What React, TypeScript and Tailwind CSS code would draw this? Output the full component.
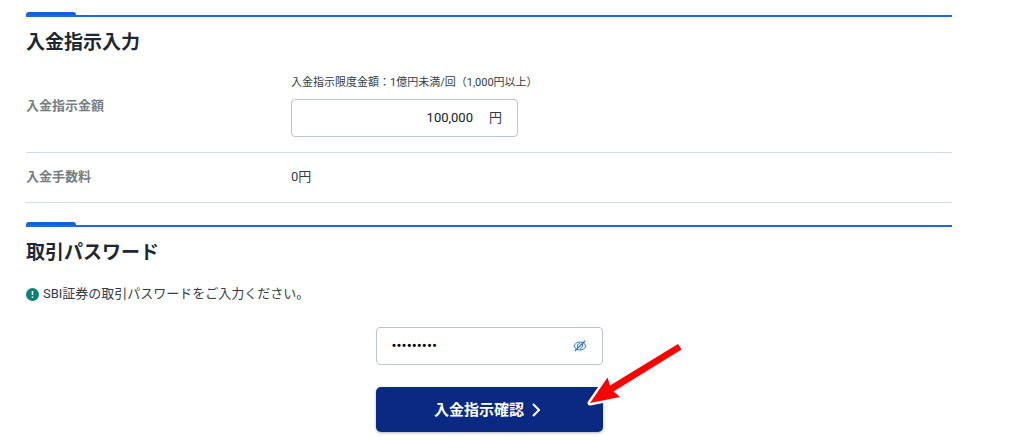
import { useState } from 'react'
import type { ReactNode } from 'react'

function SectionTitle({ children }: { children: ReactNode }) {
  return (
    <div>
      <div className="border-b-2 border-[#1b6ae0]">
        <div className="h-[3px] w-[50px] rounded-t-[3px] bg-[#1260d6]" />
      </div>
      <h2 className="mt-[13px] text-[19px] leading-[26px] font-bold text-[#1c2833]">{children}</h2>
    </div>
  )
}

function EyeOffIcon() {
  return (
    <svg viewBox="0 0 14 14" className="size-[14px]" fill="none" stroke="#2f70dc" aria-hidden="true">
      <path d="M1 7C2.2 4.3 4.3 3 7 3s4.8 1.3 6 4c-1.2 2.7-3.3 4-6 4S2.2 9.7 1 7Z" />
      <path d="M9.5 4.5C10 6.6 9.3 9 7 9.6M4.6 9C3.8 6.600 4.700 4.800 7 4.400" />
      <path d="M1.800 12 12.200 1.800" strokeWidth="1.200" />
    </svg>
  )
}

function Pointer() {
  return (
    <svg
      viewBox="0 0 100 66"
      className="pointer-events-none absolute -right-[82px] -top-[47px] h-[66px] w-[100px]"
      aria-hidden="true"
    >
      <path
        d="M5 63 22.500 38 25 46 93 4.500 96 9.500 28.500 51.500 35 57Z"
        fill="#fff"
        stroke="#fff"
        strokeWidth="5"
        strokeLinejoin="round"
      />
      <path d="M5 63 22.500 37.500 25 45.500 93 4 96.500 9.500 28.500 51.500 35 57Z" fill="#fe0000" />
    </svg>
  )
}

export default function App() {
  const [amount, setAmount] = useState('100,000')
  const [password, setPassword] = useState('password1')
  const [visible, setVisible] = useState(false)

  return (
    <main className="overflow-x-hidden bg-white pt-3 pr-[72px] pb-4 pl-[26px] font-['Roboto','Noto_Sans_CJK_JP',sans-serif] text-[13px] leading-5 text-[#333c46]">
      <section>
        <SectionTitle>入金指示入力</SectionTitle>
        <div className="mt-[19px] flex items-center border-b border-[#d3dbea] pb-[15px]">
          <label htmlFor="amount" className="w-[265px] shrink-0 font-bold text-[#767e83]">
            入金指示金額
          </label>
          <div>
            <p className="text-[11px] leading-4">入金指示限度金額：1億円未満/回（1,000円以上）</p>
            <div className="mt-2 flex h-[38px] w-[227px] items-center rounded-[4px] border border-[#bcc4d1] pr-[15px]">
              <input
                id="amount"
                type="text"
                inputMode="numeric"
                value={amount}
                onChange={(e) => setAmount(e.target.value)}
                className="w-full min-w-0 bg-transparent text-right text-[#14202b] outline-none"
              />
              <span className="ml-4 shrink-0">円</span>
            </div>
          </div>
        </div>
        <dl className="flex items-center border-b border-[#d3dbea] pt-[14px] pb-[15px]">
          <dt className="w-[265px] shrink-0 font-bold text-[#767e83]">入金手数料</dt>
          <dd>0円</dd>
        </dl>
      </section>

      <section className="mt-[19px]">
        <SectionTitle>取引パスワード</SectionTitle>
        <p className="mt-[18px] flex items-center gap-1">
          <svg viewBox="0 0 13 13" className="size-[13px]" aria-hidden="true">
            <circle cx="6.5" cy="6.5" r="6.5" fill="#078377" />
            <path d="M6.5 3v4M6.5 8.500v1.500" stroke="#fff" strokeWidth="1.5" />
          </svg>
          SBI証券の取引パスワードをご入力ください。
        </p>
        <div className="mx-auto mt-[23px] w-[227px]">
          <div className="flex h-[38px] items-center rounded-[4px] border border-[#bcc4d1] px-[15px]">
            <input
              type={visible ? 'text' : 'password'}
              aria-label="取引パスワード"
              value={password}
              onChange={(e) => setPassword(e.target.value)}
              className="w-full min-w-0 bg-transparent text-[15px] text-black outline-none"
            />
            <button type="button" aria-label="パスワードを表示" onClick={() => setVisible(!visible)}>
              <EyeOffIcon />
            </button>
          </div>
          <div className="relative mt-[22px]">
            <button
              type="button"
              className="flex h-[45px] w-full items-center justify-center gap-2 rounded-[5px] bg-[#092983] pr-1 text-[15px] font-bold text-white shadow-[0_1px_3px_rgba(0,0,0,0.3)]"
            >
              入金指示確認
              <svg viewBox="0 0 8 14" className="h-[14px] w-2" fill="none" stroke="currentColor" strokeWidth="2" aria-hidden="true">
                <path d="M1 1 7 7 1 13" />
              </svg>
            </button>
            <Pointer />
          </div>
        </div>
      </section>
    </main>
  )
}
